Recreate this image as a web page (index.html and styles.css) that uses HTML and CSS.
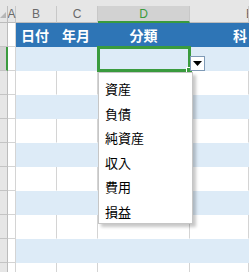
FILE: index.html
```html
<!DOCTYPE html>
<html lang="ja">
<head>
<meta charset="utf-8">
<link rel="stylesheet" href="styles.css">
</head>
<body>
<div class="sheet">
  <div class="topband"></div>
  <div class="grid colhead">
    <div class="ch corner"><span class="tri"></span></div>
    <div class="ch">A</div>
    <div class="ch">B</div>
    <div class="ch">C</div>
    <div class="ch sel">D</div>
    <div class="ch e">E</div>
  </div>
  <div class="grid row">
    <div class="rh"></div>
    <div class="c a"></div>
    <div class="c th left">日付</div>
    <div class="c th left">年月</div>
    <div class="c th center">分類</div>
    <div class="c th ecol">科目</div>
  </div>
  <div class="grid row band">
    <div class="rh active"></div>
    <div class="c a"></div>
    <div class="c"></div>
    <div class="c"></div>
    <div class="c active-cell">
      <div class="dd-btn"><svg width="9" height="5" viewBox="0 0 9 5"><path d="M0 0H9L4.5 5Z" fill="#000"/></svg></div>
      <ul class="dd-list">
        <li>資産</li>
        <li>負債</li>
        <li>純資産</li>
        <li>収入</li>
        <li>費用</li>
        <li>損益</li>
      </ul>
    </div>
    <div class="c"></div>
  </div>
  <div class="grid row"><div class="rh"></div><div class="c a"></div><div class="c"></div><div class="c"></div><div class="c"></div><div class="c"></div></div>
  <div class="grid row band"><div class="rh"></div><div class="c a"></div><div class="c"></div><div class="c"></div><div class="c"></div><div class="c"></div></div>
  <div class="grid row"><div class="rh"></div><div class="c a"></div><div class="c"></div><div class="c"></div><div class="c"></div><div class="c"></div></div>
  <div class="grid row band"><div class="rh"></div><div class="c a"></div><div class="c"></div><div class="c"></div><div class="c"></div><div class="c"></div></div>
  <div class="grid row"><div class="rh"></div><div class="c a"></div><div class="c"></div><div class="c"></div><div class="c"></div><div class="c"></div></div>
  <div class="grid row band"><div class="rh"></div><div class="c a"></div><div class="c"></div><div class="c"></div><div class="c"></div><div class="c"></div></div>
  <div class="grid row"><div class="rh"></div><div class="c a"></div><div class="c"></div><div class="c"></div><div class="c"></div><div class="c"></div></div>
  <div class="grid row band"><div class="rh"></div><div class="c a"></div><div class="c"></div><div class="c"></div><div class="c"></div><div class="c"></div></div>
  <div class="grid row"><div class="rh"></div><div class="c a"></div><div class="c"></div><div class="c"></div><div class="c"></div><div class="c"></div></div>
</div>
</body>
</html>
```

FILE: styles.css
```css
* { box-sizing: border-box; margin: 0; padding: 0; }
html, body { width: 249px; height: 272px; overflow: hidden; background: #fff; }
body { font-family: "Noto Sans CJK JP", "Liberation Sans", sans-serif; }
.sheet { width: 249px; height: 272px; overflow: hidden; position: relative; }
.topband { height: 6px; background: #e6e6e6; }
.grid { display: grid; grid-template-columns: 8px 8px 41px 41px 92px 1fr; }
.colhead { height: 17px; background: #e6e6e6; }
.ch {
  border-right: 1px solid #c8c8c8;
  border-bottom: 1px solid #bcbcbc;
  font-family: "Liberation Sans", sans-serif;
  font-size: 12px;
  color: #6a6a6a;
  display: flex; align-items: center; justify-content: center;
  line-height: 1;
}
.ch.corner { position: relative; border-right-color: #bcbcbc; }
.tri {
  position: absolute; right: 1px; bottom: 4px;
  width: 0; height: 0;
  border-left: 6px solid transparent;
  border-bottom: 6px solid #b6b6b6;
}
.ch.sel { background: #d2d2d2; color: #3a9b3e; border-bottom: 2px solid #3a9b3e; }
.ch.e { justify-content: flex-start; padding-left: 56px; overflow: hidden; }
.row { height: 24px; }
.rh { background: #e6e6e6; border-right: 1px solid #bcbcbc; border-bottom: 1px solid #c4c4c4; }
.rh.active { background: #d2d2d2; border-right: 2px solid #3a9b3e; }
.c { border-right: 1px solid #d4d4d4; border-bottom: 1px solid #d4d4d4; background: #fff; }
.c.a { background: #fff; }
.band .c { background: #ddebf7; border-right-color: #ddebf7; border-bottom-color: #ddebf7; }
.band .c.a { background: #fff; border-right-color: #d4d4d4; border-bottom-color: #d4d4d4; }
.row .c:not(.a) { border-bottom-color: transparent; }
.c.th {
  background: #2e75b6; border-right-color: #2e75b6; border-bottom-color: #2e75b6;
  color: #fff; font-weight: bold; font-size: 14px;
  display: flex; align-items: center; white-space: nowrap; overflow: hidden;
}
.c.th.left { padding-left: 5px; }
.c.th.center { justify-content: center; }
.c.th.ecol { padding-left: 43px; }
.active-cell { position: relative; }
.active-cell::before {
  content: ""; position: absolute;
  left: -1px; top: -1px; right: -2px; bottom: -2px;
  border: 3px solid #3a9b3e;
  z-index: 2;
}
.active-cell::after {
  content: ""; position: absolute;
  right: -4px; bottom: -4px; width: 5px; height: 5px;
  background: #3a9b3e; border: 1px solid #fff;
  z-index: 3;
}
.dd-btn {
  position: absolute; left: 92px; top: 9px;
  width: 15px; height: 15px;
  background: #fff; border: 1px solid #7f9ab6;
  display: flex; align-items: center; justify-content: center;
  z-index: 4;
}
.dd-list {
  position: absolute; left: 0; top: 25px;
  width: 95px; height: 152px;
  list-style: none;
  background: #fff;
  border: 1px solid #c6c6c6;
  box-shadow: 3px 3px 3px rgba(0,0,0,0.22);
  padding: 4px 0 0 0;
  z-index: 5;
}
.dd-list li {
  height: 24.5px; line-height: 24px;
  padding-left: 6px;
  font-size: 13px; color: #000;
}
```
